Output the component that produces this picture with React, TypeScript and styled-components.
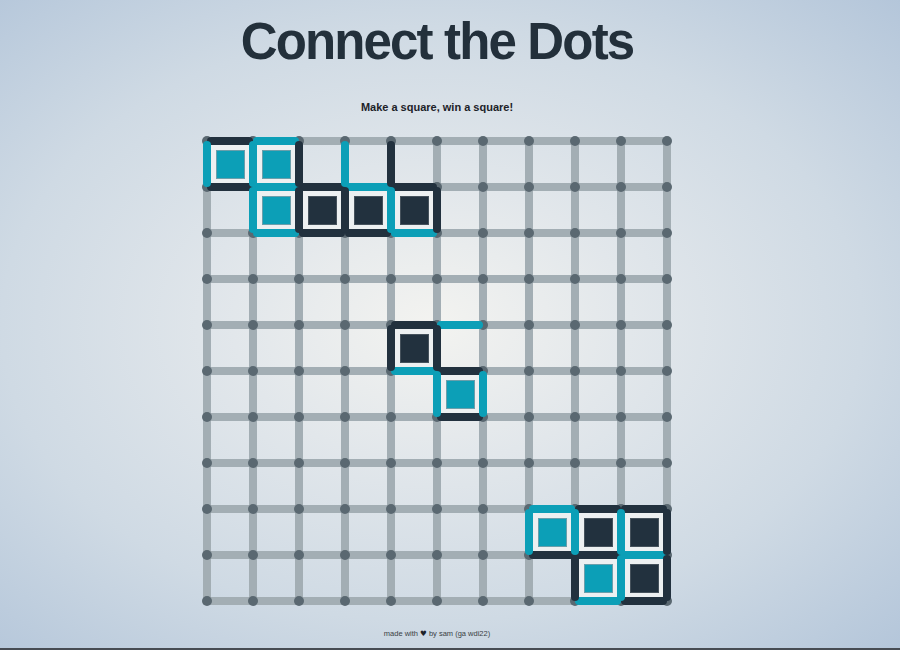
import React from "react";
import styled, { createGlobalStyle } from "styled-components";

const GlobalStyle = createGlobalStyle`
  html, body {
    margin: 0;
    padding: 0;
  }
  body {
    font-family: "Liberation Sans", "Helvetica Neue", Arial, sans-serif;
    background: #d3dde6;
  }
`;

type Owner = "T" | "D";

const TEAL = "#0c9fb7";
const DARK = "#22313e";
const GREY_LINE = "#a3aeb4";
const DOT = "#5a6871";

const hEdges: Record<string, Owner> = {
  "0,0": "D", "1,0": "T",
  "0,1": "D", "1,1": "T", "2,1": "D", "3,1": "T", "4,1": "D",
  "1,2": "T", "2,2": "D", "3,2": "D", "4,2": "T",
  "4,4": "D", "5,4": "T",
  "4,5": "T", "5,5": "D",
  "5,6": "D",
  "7,8": "T", "8,8": "D", "9,8": "D",
  "7,9": "D", "8,9": "D", "9,9": "T",
  "8,10": "T", "9,10": "D",
};

const vEdges: Record<string, Owner> = {
  "0,0": "T", "1,0": "T", "2,0": "D", "3,0": "T", "4,0": "D",
  "1,1": "T", "2,1": "D", "3,1": "D", "4,1": "T", "5,1": "D",
  "4,4": "D", "5,4": "D",
  "5,5": "T", "6,5": "T",
  "7,8": "T", "8,8": "T", "9,8": "T", "10,8": "D",
  "8,9": "D", "9,9": "T", "10,9": "D",
};

const cells: Record<string, Owner> = {
  "0,0": "T", "1,0": "T", "1,1": "T", "2,1": "D", "3,1": "D", "4,1": "D",
  "4,4": "D", "5,5": "T",
  "7,8": "T", "8,8": "D", "9,8": "D", "8,9": "T", "9,9": "D",
};

const colorOf = (o?: Owner) => (o === "T" ? TEAL : o === "D" ? DARK : GREY_LINE);

const Page = styled.div`
  box-sizing: border-box;
  min-height: 100vh;
  width: 100%;
  padding-right: 26px;
  display: flex;
  flex-direction: column;
  align-items: center;
  border-bottom: 2px solid #474c53;
  background: radial-gradient(
    ellipse farthest-corner at 48% 50%,
    #f3f3f0 0%,
    #e2e7eb 30%,
    #cfdae4 65%,
    #b4c6da 100%
  );
`;

const Title = styled.h1`
  margin: 16px 0 0;
  font-size: 51px;
  line-height: 1;
  font-weight: 700;
  letter-spacing: -1.85px;
  color: #23303b;
`;

const Subtitle = styled.p`
  margin: 35px 0 0;
  font-size: 11px;
  line-height: 1;
  font-weight: 700;
  color: #1c2228;
`;

const Board = styled.div`
  margin-top: 24px;
  display: grid;
  grid-template-columns: repeat(10, 8px 38px) 8px;
  grid-template-rows: repeat(10, 8px 38px) 8px;
`;

const Dot = styled.div`
  position: relative;
  z-index: 1;
  width: 10px;
  height: 10px;
  margin: -1px;
  border-radius: 50%;
  background: ${DOT};
`;

const HLine = styled.div<{ $owner?: Owner }>`
  position: relative;
  z-index: ${(p) => (p.$owner ? 2 : 0)};
  margin: 0 -4px;
  border-radius: 4px;
  background: ${(p) => colorOf(p.$owner)};
`;

const VLine = styled.div<{ $owner?: Owner }>`
  position: relative;
  z-index: ${(p) => (p.$owner ? 3 : 0)};
  margin: -4px 0;
  border-radius: 4px;
  background: ${(p) => colorOf(p.$owner)};
`;

const Cell = styled.div<{ $owner?: Owner }>`
  display: flex;
  align-items: center;
  justify-content: center;
  background: ${(p) => (p.$owner ? "#edf0f1" : "transparent")};
`;

const Fill = styled.div<{ $owner: Owner }>`
  box-sizing: border-box;
  width: 29px;
  height: 29px;
  border: 1px solid ${(p) => (p.$owner === "T" ? "#6a9fab" : "#46525c")};
  background: ${(p) => colorOf(p.$owner)};
`;

const Footer = styled.footer`
  margin-top: 25px;
  font-size: 7.5px;
  line-height: 1;
  color: #3a3f44;
`;

const Heart = styled.span`
  font-family: "DejaVu Sans", sans-serif;
  color: #1e2329;
`;

const N = 10;

function BoardView() {
  const items: React.ReactNode[] = [];
  for (let r = 0; r <= 2 * N; r++) {
    for (let c = 0; c <= 2 * N; c++) {
      const key = `${r}-${c}`;
      const evenR = r % 2 === 0;
      const evenC = c % 2 === 0;
      if (evenR && evenC) {
        items.push(<Dot key={key} />);
      } else if (evenR && !evenC) {
        const i = (c - 1) / 2;
        const j = r / 2;
        items.push(<HLine key={key} $owner={hEdges[`${i},${j}`]} />);
      } else if (!evenR && evenC) {
        const i = c / 2;
        const j = (r - 1) / 2;
        items.push(<VLine key={key} $owner={vEdges[`${i},${j}`]} />);
      } else {
        const i = (c - 1) / 2;
        const j = (r - 1) / 2;
        const o = cells[`${i},${j}`];
        items.push(
          <Cell key={key} $owner={o}>
            {o && <Fill $owner={o} />}
          </Cell>
        );
      }
    }
  }
  return <Board>{items}</Board>;
}

export default function App() {
  return (
    <>
      <GlobalStyle />
      <Page>
        <Title>Connect the Dots</Title>
        <Subtitle>Make a square, win a square!</Subtitle>
        <BoardView />
        <Footer>
          made with <Heart>♥</Heart> by sam (ga wdi22)
        </Footer>
      </Page>
    </>
  );
}
